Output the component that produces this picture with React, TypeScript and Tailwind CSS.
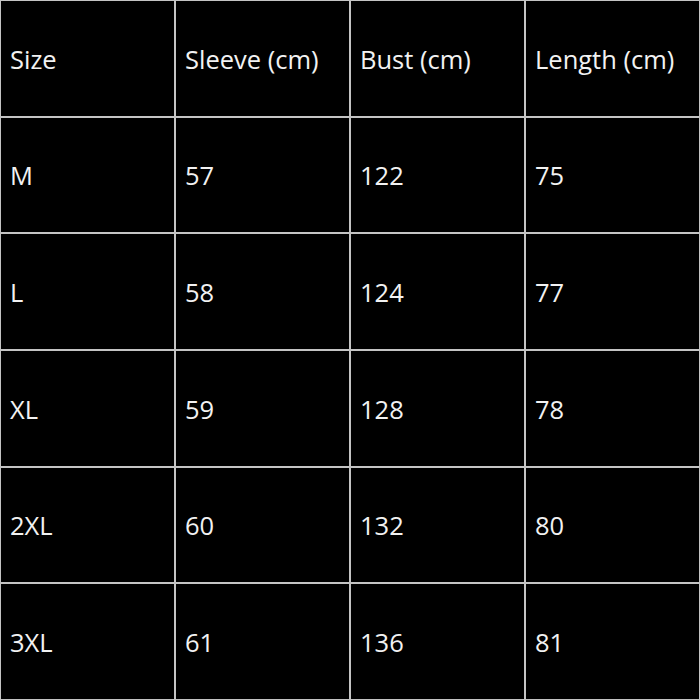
import React from "react";

const headers = ["Size", "Sleeve (cm)", "Bust (cm)", "Length (cm)"];

const rows = [
  ["M", "57", "122", "75"],
  ["L", "58", "124", "77"],
  ["XL", "59", "128", "78"],
  ["2XL", "60", "132", "80"],
  ["3XL", "61", "136", "81"],
];

const App = () => {
  return (
    <div
      className="w-[700px] h-[700px] bg-[#c4c4c4] p-px grid grid-cols-4 grid-rows-6 gap-[2px]"
      style={{ fontFamily: '"Open Sans", sans-serif' }}
    >
      {[headers, ...rows].map((row, i) =>
        row.map((cell, j) => (
          <div
            key={`${i}-${j}`}
            className="bg-black text-[#f2f2f2] text-[25.5px] flex items-center pl-[9px] pt-[1px]"
          >
            {cell}
          </div>
        ))
      )}
    </div>
  );
};

export default App;
